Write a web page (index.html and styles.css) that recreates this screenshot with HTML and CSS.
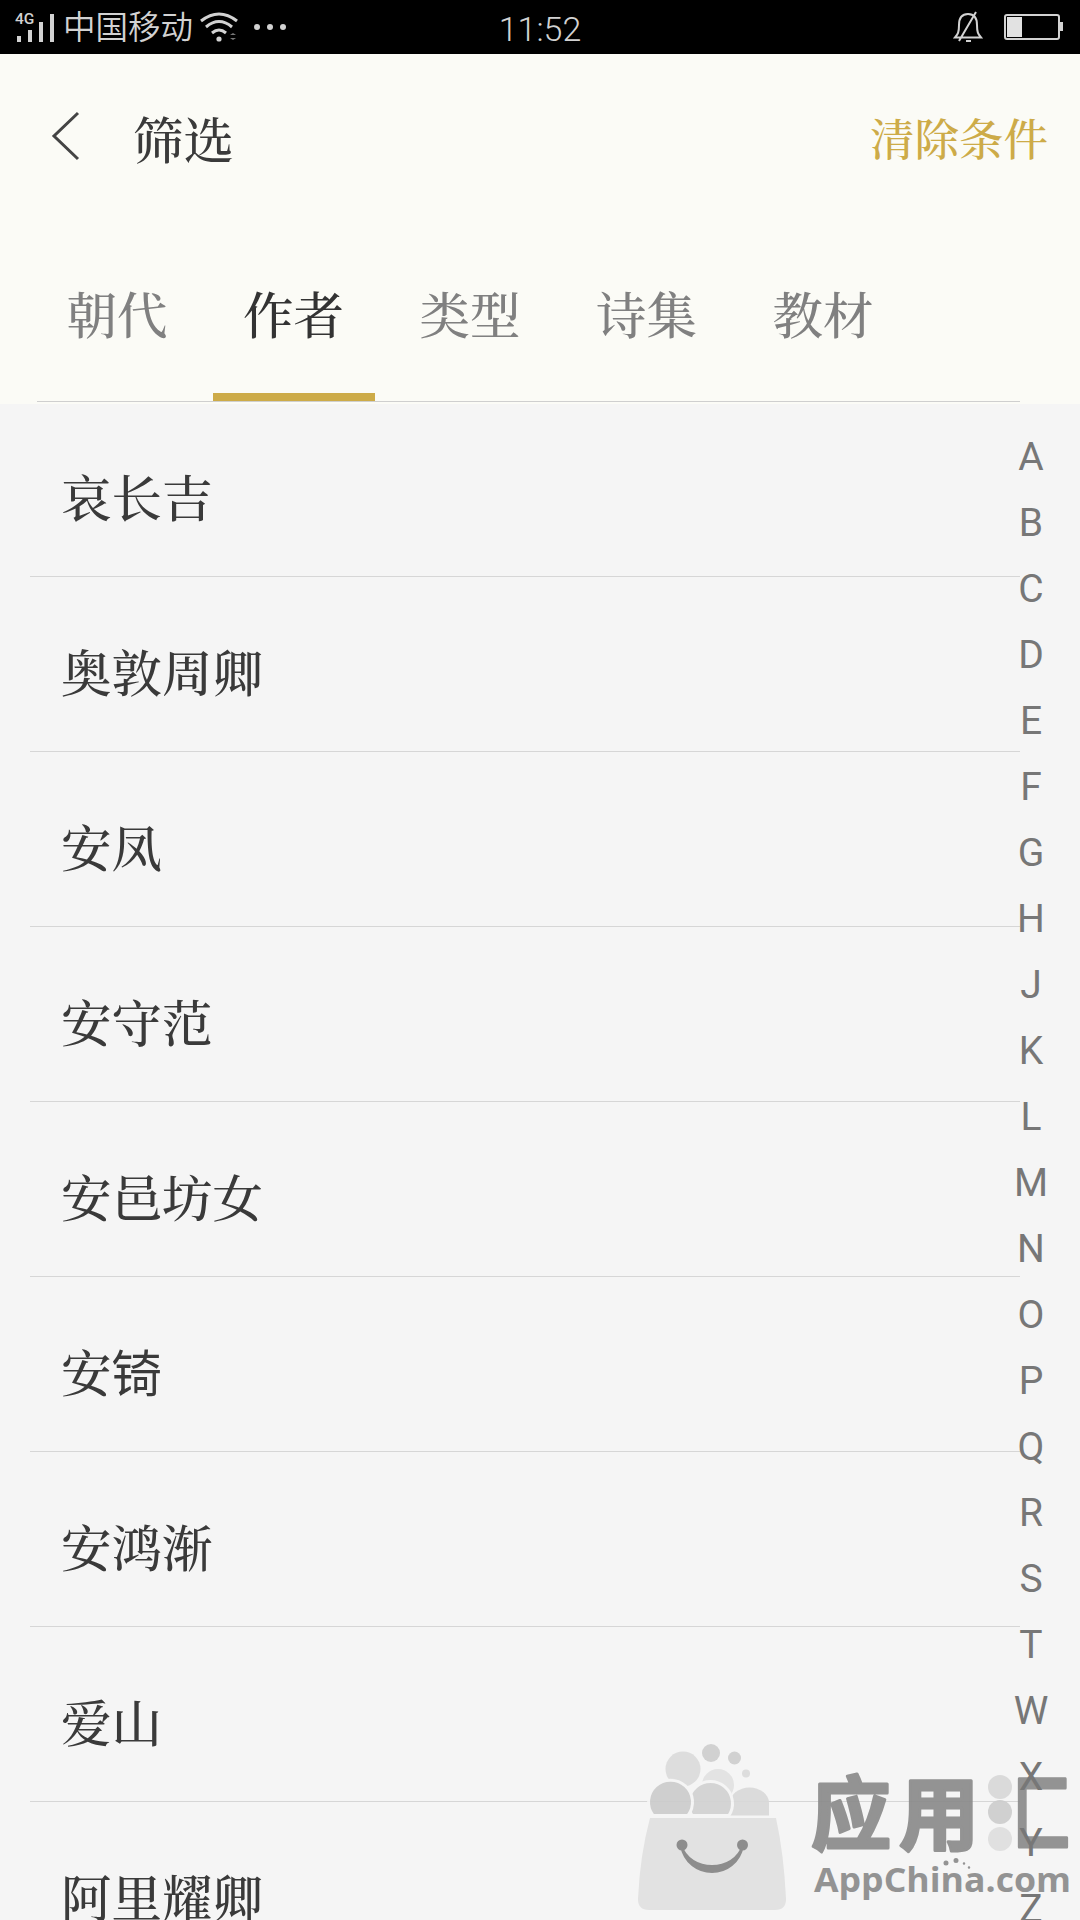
FILE: index.html
```html
<!DOCTYPE html>
<html lang="zh-CN">
<head>
  <meta charset="UTF-8" />
  <meta name="viewport" content="width=device-width, initial-scale=1" />
  <title>筛选</title>
  <link rel="stylesheet" href="styles.css">
</head>
<body>

  <!-- 状态栏 -->
  <div class="status-bar">
    <div class="status-left">
      <svg class="signal" width="40" height="36" viewBox="0 -6 40 36">
        <text x="0" y="11" class="net">4G</text>
        <path d="M4 23v6M15 17v12M26 9v20M37 1v28" />
      </svg>
      <span class="carrier">中国移动</span>
      <svg class="wifi" width="38" height="30" viewBox="0 0 38 30">
        <path d="M1 9Q19 -5 37 9M6 15Q19 4 32 15M12 21Q19 15 26 21" />
        <circle cx="19" cy="27" r="2.6" />
        <path class="arrow" d="M30 23l3-2 3 2zM30 26l3 2 3-2z" />
      </svg>
      <div class="more"><i></i><i></i><i></i></div>
    </div>
    <span class="time">11:52</span>
    <div class="status-right">
      <svg width="30" height="34" viewBox="0 0 30 34">
        <path d="M2 27.500C5 24 6 22 6 15C6 8 9 4 15 4C21 4 24 8 24 15C24 22 25 24 28 27.500ZM6 31L23 2M13 31h5" />
      </svg>
      <div class="battery"><div class="battery-body"><div class="battery-level"></div></div><div class="battery-tip"></div></div>
    </div>
  </div>

  <!-- 标题和分类 -->
  <div class="header">
    <div class="title-bar">
      <svg class="back" width="30" height="50" viewBox="0 0 30 50">
        <path d="M27 2L3 25L27 48" />
      </svg>
      <h1>筛选</h1>
      <a class="clear">清除条件</a>
    </div>
    <div class="tabs">
      <div class="tab">朝代</div>
      <div class="tab active">作者</div>
      <div class="tab">类型</div>
      <div class="tab">诗集</div>
      <div class="tab">教材</div>
    </div>
  </div>

  <!-- 作者列表 -->
  <div class="content">
    <ul class="authors">
      <li>哀长吉</li>
      <li>奥敦周卿</li>
      <li>安凤</li>
      <li>安守范</li>
      <li>安邑坊女</li>
      <li>安<span class="rare">锜</span></li>
      <li>安鸿渐</li>
      <li>爱山</li>
      <li>阿里耀卿</li>
    </ul>
    <div class="letters">
      <span>A</span><span>B</span><span>C</span><span>D</span><span>E</span><span>F</span>
      <span>G</span><span>H</span><span>J</span><span>K</span><span>L</span><span>M</span>
      <span>N</span><span>O</span><span>P</span><span>Q</span><span>R</span><span>S</span>
      <span>T</span><span>W</span><span>X</span><span>Y</span><span>Z</span>
    </div>
  </div>

  <!-- 水印 -->
  <svg class="watermark" width="450" height="180" viewBox="630 1740 450 180">
    <g class="bubbles">
      <circle cx="683" cy="1769" r="17.500" fill="#dcdcdc" />
      <circle cx="711" cy="1753" r="9" fill="#cfcfcf" />
      <circle cx="734.500" cy="1758" r="6.500" fill="#cfcfcf" />
      <circle cx="746" cy="1773.500" r="4" fill="#dcdcdc" />
      <circle cx="718" cy="1785" r="16" fill="#e2e2e2" />
      <path d="M730 1815.500V1803a19 15 0 0 1 39 0V1815.500Z" fill="#d9d9d9" />
      <path class="edge" d="M692 1815.500A22 22 0 1 1 729 1815.500Z" fill="#d2d2d2" />
      <path class="edge" d="M653 1815.500A22 22 0 1 1 688 1815.500Z" fill="#cccccc" />
    </g>
    <path d="M650 1818H776Q784 1855 786 1899Q786 1910 775 1910H649Q638 1910 638 1899Q640 1855 650 1818Z" fill="#e1e1e1" />
    <circle cx="682" cy="1845" r="5.500" fill="#858585" />
    <circle cx="742.500" cy="1845" r="5.500" fill="#858585" />
    <path d="M681 1845C687 1881 737 1881 743 1845C734 1873 690 1873 681 1845Z" fill="#858585" stroke="#858585" stroke-width="2" />
    <text class="brand" x="811" y="1843">应</text>
    <text class="brand" x="899" y="1843">用</text>
    <circle cx="1000" cy="1787" r="12" fill="#d8d8d8" />
    <circle cx="1000" cy="1812" r="12" fill="#cdcdcd" />
    <circle cx="1000" cy="1839" r="12" fill="#dfdfdf" />
    <text class="brand" transform="translate(1013 1844) scale(.73 1.04)">匚</text>
    <text class="domain" x="814" y="1891.500" textLength="257" lengthAdjust="spacingAndGlyphs">AppChina.com</text>
    <path class="dots" d="M946 1863h0M956 1860.500h0" />
    <path class="dots small" d="M964 1863.500h0M969 1867.500h0" />
  </svg>

</body>
</html>
```

FILE: styles.css
```css
body {
  margin: 0;
  width: 1080px;
  height: 1920px;
  overflow: hidden;
  position: relative;
  background-color: #f5f5f5;
  color: #3a3a3a;
  font-family: "Noto Serif CJK SC", "Noto Sans CJK SC", serif;
}

/* 状态栏 */
.status-bar {
  height: 54px;
  background-color: #000;
  color: #d2d2d2;
  display: grid;
  grid-template-columns: 1fr auto 1fr;
  align-items: center;
  font-family: Roboto, "Noto Sans CJK SC", sans-serif;
}

.status-left {
  display: flex;
  align-items: center;
  padding: 0 0 0 15px;
}

.status-bar svg {
  fill: none;
  stroke: #d2d2d2;
}

.signal {
  stroke-width: 4px;
  margin-top: -7px;
}

.signal .net {
  fill: #d2d2d2;
  stroke: none;
  font-size: 15.500px;
  font-weight: 500;
}

.carrier {
  font-family: "Noto Sans CJK SC", sans-serif;
  font-weight: 350;
  font-size: 32.500px;
  line-height: 44px;
  height: 50px;
  margin-left: 8px;
}

.wifi {
  stroke-width: 3px;
  margin: -3px 0 0 7px;
}

.status-bar .wifi circle {
  fill: #d2d2d2;
  stroke: none;
}

.status-bar .wifi .arrow {
  fill: #777;
  stroke: none;
}

.more {
  display: flex;
  gap: 7px;
  margin: -2px 0 0 16px;
}

.more i {
  width: 6px;
  height: 6px;
  border-radius: 50%;
  background-color: #d2d2d2;
}

.time {
  font-size: 34px;
  line-height: 54px;
  font-weight: 300;
  padding-top: 2px;
}

.status-right {
  display: flex;
  justify-content: flex-end;
  align-items: center;
  gap: 21px;
  padding: 0 17px 0 0;
  margin-top: -3px;
  stroke-width: 2px;
}

.battery {
  display: flex;
  align-items: center;
}

.battery-body {
  width: 50px;
  height: 20px;
  padding: 1px;
  border: 2px solid #d2d2d2;
  border-radius: 3px;
}

.battery-level {
  width: 15px;
  height: 20px;
  background-color: #e2e2e2;
}

.battery-tip {
  width: 3px;
  height: 9px;
  background-color: #d2d2d2;
}

/* 标题 */
.header {
  height: 350px;
  background-color: #fbfbf6;
}

.title-bar {
  height: 172px;
  display: flex;
  align-items: center;
  padding: 0 32px 0 51px;
}

.back {
  fill: none;
  stroke: #444;
  stroke-width: 3px;
  margin-top: -8px;
}

.title-bar h1 {
  margin: -7px auto 0 52px;
  font-size: 50.500px;
  font-weight: 500;
  line-height: 72px;
}

.clear {
  margin-top: -7px;
  color: #cdab48;
  font-size: 44.500px;
  font-weight: 500;
}

/* 分类标签 */
.tabs {
  height: 175px;
  margin: 0 60px 0 37px;
  display: flex;
  gap: 14.500px;
  border-bottom: 1px solid #cfcfcf;
}

.tab {
  box-sizing: border-box;
  height: 175px;
  width: 162px;
  margin-left: -1px;
  margin-right: 1px;
  text-align: center;
  font-size: 50.500px;
  font-weight: 500;
  line-height: 172px;
  color: #808080;
}

.tab.active {
  color: #333;
  border-bottom: 8px solid #cdab48;
}

/* 列表和字母索引 */
.content {
  height: 1516px;
  display: flex;
  overflow: hidden;
}

.authors {
  list-style: none;
  margin: -2px 0 0 30px;
  padding: 0;
  width: 990px;
  flex: none;
}

.authors li {
  box-sizing: border-box;
  height: 175px;
  padding-left: 31px;
  border-bottom: 1px solid #d6d6d6;
  font-size: 50.500px;
  font-weight: 500;
  line-height: 187px;
}

.rare {
  font-family: "Noto Sans CJK SC", sans-serif;
  font-weight: 400;
}

.letters {
  width: 60px;
  margin: 20px 0 0 -19px;
  display: flex;
  flex-direction: column;
  flex: none;
  position: relative;
  z-index: 2;
  text-align: center;
  color: #777;
  font: 39px/66px Roboto, sans-serif;
}

/* 水印 */
.watermark {
  position: absolute;
  left: 630px;
  top: 1740px;
  opacity: .92;
}

.edge {
  stroke: #f5f5f5;
  stroke-width: 3px;
}

.brand {
  font-family: "Noto Sans CJK SC", sans-serif;
  font-weight: 700;
  font-size: 80px;
  fill: #8b8b8b;
  stroke: #8b8b8b;
  stroke-width: 3px;
  stroke-linejoin: round;
}

.domain {
  font-family: "Open Sans", sans-serif;
  font-weight: 700;
  font-size: 34px;
  fill: #8b8b8b;
}

.dots {
  stroke: #8b8b8b;
  stroke-width: 5px;
  stroke-linecap: round;
}

.dots.small {
  stroke-width: 2.500px;
}
```
